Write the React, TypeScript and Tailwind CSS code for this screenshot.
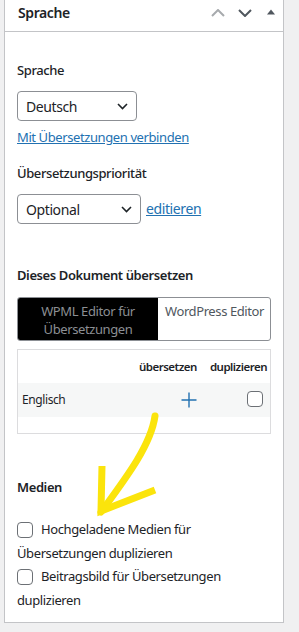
import React from "react";

const Chevron = () => (
  <svg width="11" height="7" viewBox="0 0 11 7" fill="none">
    <path d="M1 1l4.5 4.5L10 1" stroke="#1d2327" strokeWidth="1.6" />
  </svg>
);

const Box = () => (
  <span className="inline-block w-4 h-4 rounded-[4px] border border-[#6c7075] bg-white align-middle shrink-0 -mt-[2px]" />
);

export default function App() {
  return (
    <div
      className="w-[299px] min-h-[632px] bg-[#f0f0f1] pl-1 text-[#1d2327] tracking-[-0.4px]"
      style={{ fontFamily: '"Noto Sans", "Open Sans", sans-serif' }}
    >
      <div className="relative w-[280px] h-[623px] border-x border-b border-[#c3c4c7] bg-white">
        {/* header */}
        <div className="h-8 border-b border-[#c3c4c7] flex items-center pl-[13px] pr-[8px]">
          <div className="flex-1 text-[14px] font-semibold leading-5 -mt-[5px]">Sprache</div>
          <div className="flex items-center gap-[13px] -mt-[5px]">
            <svg width="14" height="8" viewBox="0 0 14 8" fill="none">
              <path d="M1 7l6-6 6 6" stroke="#a7aaad" strokeWidth="2" />
            </svg>
            <svg width="14" height="8" viewBox="0 0 14 8" fill="none">
              <path d="M1 1l6 6 6-6" stroke="#50575e" strokeWidth="2" />
            </svg>
            <svg width="8" height="6" viewBox="0 0 8 6" className="ml-[2px] -mt-[2px]">
              <path d="M0 5.5L4 0.5 8 5.5z" fill="#50575e" />
            </svg>
          </div>
        </div>

        <div className="px-3 text-[13px]">
          <div className="pt-[28px] leading-5 font-medium">Sprache</div>
          <div className="mt-[11px] w-[120px] h-[30px] rounded-[4px] border border-[#8c8f94] flex items-center justify-between pl-[8px] pr-[8px] text-[14px]">
            <span>Deutsch</span>
            <Chevron />
          </div>
          <div className="mt-[6px] leading-5">
            <span className="text-[#2271b1] underline">Mit Übersetzungen verbinden</span>
          </div>
          <div className="mt-4 leading-5 font-medium">Übersetzungspriorität</div>
          <div className="mt-[11px] flex items-center gap-[5px]">
            <div className="w-[124px] h-[30px] rounded-[4px] border border-[#8c8f94] flex items-center justify-between pl-[8px] pr-[8px] text-[14px]">
              <span>Optional</span>
              <Chevron />
            </div>
            <span className="text-[#2271b1] underline text-[14px] leading-5 -mt-[1px]">editieren</span>
          </div>

          <div className="mt-[41px] leading-5 font-semibold">Dieses Dokument übersetzen</div>
          <div className="mt-3 h-[44px] flex border border-[#8c8f94] rounded-[3px] overflow-hidden">
            <div className="w-[140px] bg-black text-[#8c8f94] text-center leading-[18px] pt-1">
              WPML Editor für
              <br />
              Übersetzungen
            </div>
            <div className="flex-1 pl-[7px] pt-1 leading-[18px] text-[#50575e] whitespace-nowrap">WordPress Editor</div>
          </div>

          <div className="mt-2 border border-[#dcdcde] text-[12px]">
            <div className="h-[33px] flex items-center justify-end gap-[13px] pr-[3px] font-semibold text-[11.5px] tracking-[-0.5px]">
              <span>übersetzen</span>
              <span>duplizieren</span>
            </div>
            <div className="h-[34px] bg-[#f6f7f7] flex items-center pr-[7px]">
              <span className="flex-1 pl-1">Englisch</span>
              <svg width="16" height="16" viewBox="0 0 16 16">
                <path d="M8 0.5v15M0.5 8h15" stroke="#2271b1" strokeWidth="1.4" />
              </svg>
              <span className="ml-[50px] flex">
                <Box />
              </span>
            </div>
            <div className="h-4" />
          </div>

          <div className="mt-[43px] leading-5 font-semibold">Medien</div>
          <div className="mt-[21px] leading-[23.5px] text-[13px]">
            <Box /> <span className="ml-[5px]">Hochgeladene Medien für Übersetzungen duplizieren</span>
          </div>
          <div className="leading-[23.5px] text-[13px]">
            <Box /> <span className="ml-[5px]">Beitragsbild für Übersetzungen duplizieren</span>
          </div>
        </div>

        {/* yellow annotation arrow */}
        <svg
          className="absolute left-0 top-0 pointer-events-none"
          width="280"
          height="623"
          viewBox="0 0 280 623"
          fill="none"
        >
          <path d="M150 416 C146 445, 121 478, 96 512" stroke="#fbe40c" strokeWidth="7" strokeLinecap="round" />
          <path d="M97 466 L96 511 L150 490" stroke="#fbe40c" strokeWidth="7" strokeLinejoin="miter" />
        </svg>
      </div>
    </div>
  );
}
